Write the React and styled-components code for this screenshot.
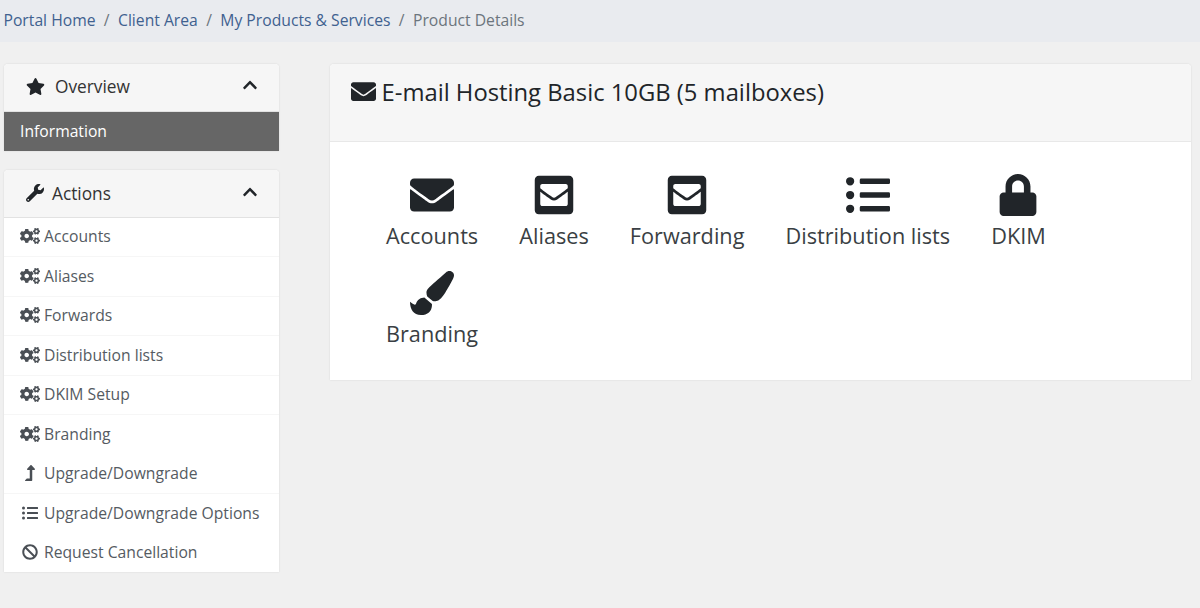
import React from "react";
import styled, { createGlobalStyle } from "styled-components";
import {
  FaStar, FaChevronUp, FaWrench, FaCogs, FaLevelUpAlt, FaListUl, FaBan,
  FaEnvelope, FaEnvelopeSquare, FaLock, FaPaintBrush,
} from "react-icons/fa";

const Global = createGlobalStyle`
  html, body { margin: 0; padding: 0; background: #f0f0f0; }
  body { font-family: "Open Sans", "Noto Sans", sans-serif; color: #212529; width: 1200px; height: 608px; overflow: hidden; }
  * { box-sizing: border-box; }
`;

const Breadcrumb = styled.nav`
  height: 42px; background: #e9ebef; display: flex; align-items: center;
  padding: 0 4px 3px 3.5px; font-size: 15.7px; color: #6c757d;
`;
const Crumb = styled.a`color: #40618f; text-decoration: none;`;
const Sep = styled.span`padding: 0 8.4px; color: #6c757d;`;

const Content = styled.div`
  display: flex; align-items: flex-start; padding: 22px 9px 0 4px;
`;
const Sidebar = styled.aside`
  width: 275px; flex: none; margin-right: 51px; display: flex; flex-direction: column; gap: 18.5px;
`;
const Panel = styled.section`
  background: #fff; border-radius: 4px 4px 0 0; box-shadow: 0 0 2px rgba(0,0,0,.13); overflow: hidden;
`;
const PanelHead = styled.div`
  height: 48px; background: #f6f6f6; border-bottom: 1px solid #e2e2e2; display: flex; align-items: center;
  padding: 0 0 ${p => p.$lift} 22px; font-size: 17.3px; color: #333;
  svg.lead { color: #212529; margin-right: ${p => p.$gap}; }
`;
const Chevron = styled(FaChevronUp)`
  margin-left: auto; margin-right: 21px; margin-top: -3px; font-size: 16px; color: #212529;
`;
const Active = styled.div`
  height: 39px; background: #666; color: #fff; padding: 0 0 2px 16px; display: flex; align-items: center; font-size: 15.7px;
`;
const Item = styled.a`
  height: 39.5px; display: flex; align-items: center; padding: 0 0 1.4px 16px; font-size: 15.7px; color: #555b62;
  border-bottom: 1px solid ${p => (p.$line ? "#f6f6f6" : "transparent")};
  &:last-child { border-bottom: 0; height: 38.5px; }
`;
const ItemIcon = styled.span`
  width: 20px; margin-right: 4px; display: flex; justify-content: center; font-size: ${p => p.$size}px; color: #4a4f55;
`;

const Card = styled.main`
  flex: 1; height: 316px; background: #fff; border-radius: 4px 4px 0 0; box-shadow: 0 0 2px rgba(0,0,0,.13); overflow: hidden;
`;
const CardHead = styled.div`
  height: 78px; background: #f6f6f6; border-bottom: 1px solid #e8e8e8; padding: 10px 0 0 21px;
  display: flex; align-items: flex-start; font-size: 23.8px; color: #212529; line-height: 36px;
  svg { font-size: 25px; margin: 5px 5.5px 0 0; }
`;
const Tiles = styled.div`
  display: flex; flex-wrap: wrap; padding: 28px 0 0 56px; width: 780px;
`;
const Tile = styled.a`
  display: flex; flex-direction: column; align-items: center; height: 98px; margin-right: 41px;
  font-size: 21.7px; color: #3a3f44; line-height: 30px;
`;
const TileIcon = styled.span`
  height: 51px; padding-bottom: 2px; display: flex; align-items: center; font-size: ${p => p.$size}px; color: #212529;
`;

const actions = [
  [FaCogs, "Accounts", 1, 20], [FaCogs, "Aliases", 1, 20], [FaCogs, "Forwards", 1, 20],
  [FaCogs, "Distribution lists", 1, 20], [FaCogs, "DKIM Setup", 1, 20], [FaCogs, "Branding", 0, 20],
  [FaLevelUpAlt, "Upgrade/Downgrade", 1, 16], [FaListUl, "Upgrade/Downgrade Options", 0, 16], [FaBan, "Request Cancellation", 0, 16],
];
const tiles = [
  [FaEnvelope, "Accounts", 44], [FaEnvelopeSquare, "Aliases", 44], [FaEnvelopeSquare, "Forwarding", 44],
  [FaListUl, "Distribution lists", 44], [FaLock, "DKIM", 42], [FaPaintBrush, "Branding", 44],
];

export default function App() {
  return (
    <>
      <Global />
      <Breadcrumb>
        <Crumb>Portal Home</Crumb><Sep>/</Sep>
        <Crumb>Client Area</Crumb><Sep>/</Sep>
        <Crumb>My Products &amp; Services</Crumb><Sep>/</Sep>
        <span>Product Details</span>
      </Breadcrumb>
      <Content>
        <Sidebar>
          <Panel>
            <PanelHead $gap="10px" $lift="2px"><FaStar className="lead" size={19} />Overview<Chevron /></PanelHead>
            <Active>Information</Active>
          </Panel>
          <Panel>
            <PanelHead $gap="8px" $lift="0px"><FaWrench className="lead" size={18} />Actions<Chevron /></PanelHead>
            {actions.map(([I, t, l, s]) => (
              <Item key={t} $line={l}><ItemIcon $size={s}><I /></ItemIcon>{t}</Item>
            ))}
          </Panel>
        </Sidebar>
        <Card>
          <CardHead><FaEnvelope />E-mail Hosting Basic 10GB (5 mailboxes)</CardHead>
          <Tiles>
            {tiles.map(([I, t, s]) => (
              <Tile key={t}><TileIcon $size={s}><I /></TileIcon>{t}</Tile>
            ))}
          </Tiles>
        </Card>
      </Content>
    </>
  );
}
